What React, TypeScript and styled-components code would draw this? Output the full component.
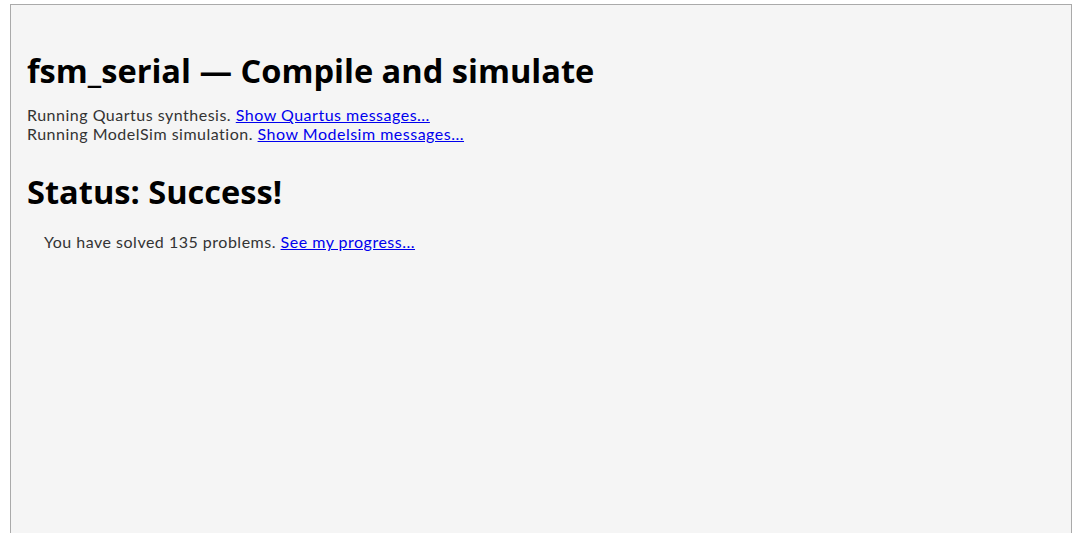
import * as React from 'react'
import styled, { createGlobalStyle } from 'styled-components'

const GlobalStyle = createGlobalStyle`
  html, body {
    margin: 0;
    padding: 0;
    background: #ffffff;
  }
`

const Page = styled.div`
  padding: 4px 8px 0 10px;
  height: 533px;
  box-sizing: border-box;
`

const Frame = styled.div`
  height: 100%;
  box-sizing: border-box;
  border: 1px solid #aaaaaa;
  border-bottom: 0;
  background: #f5f5f5;
  padding: 45px 16px 0 16px;
  font-family: Lato, 'Open Sans', sans-serif;
  font-size: 16px;
  letter-spacing: 0.5px;
  color: #333333;
`

const Heading = styled.h1<{ $gap: string }>`
  margin: ${({ $gap }) => $gap};
  font-family: 'Open Sans', sans-serif;
  font-weight: 700;
  font-size: 32.6px;
  line-height: 1.3;
  letter-spacing: 0;
  color: #000000;
`

const Line = styled.div<{ $indent?: boolean }>`
  line-height: 19px;
  padding-left: ${({ $indent }) => ($indent ? '17px' : '0')};
`

const Link = styled.a`
  color: #0000ee;
  text-decoration: underline;
  cursor: pointer;
`

export default function App() {
  return (
    <>
      <GlobalStyle />
      <Page>
        <Frame>
          <Heading $gap="0 0 13px 0">fsm_serial — Compile and simulate</Heading>
          <Line>
            Running Quartus synthesis. <Link>Show Quartus messages...</Link>
          </Line>
          <Line>
            Running ModelSim simulation. <Link>Show Modelsim messages...</Link>
          </Line>
          <Heading $gap="28px 0 18px 0">Status: Success!</Heading>
          <Line $indent>
            You have solved 135 problems. <Link>See my progress...</Link>
          </Line>
        </Frame>
      </Page>
    </>
  )
}
